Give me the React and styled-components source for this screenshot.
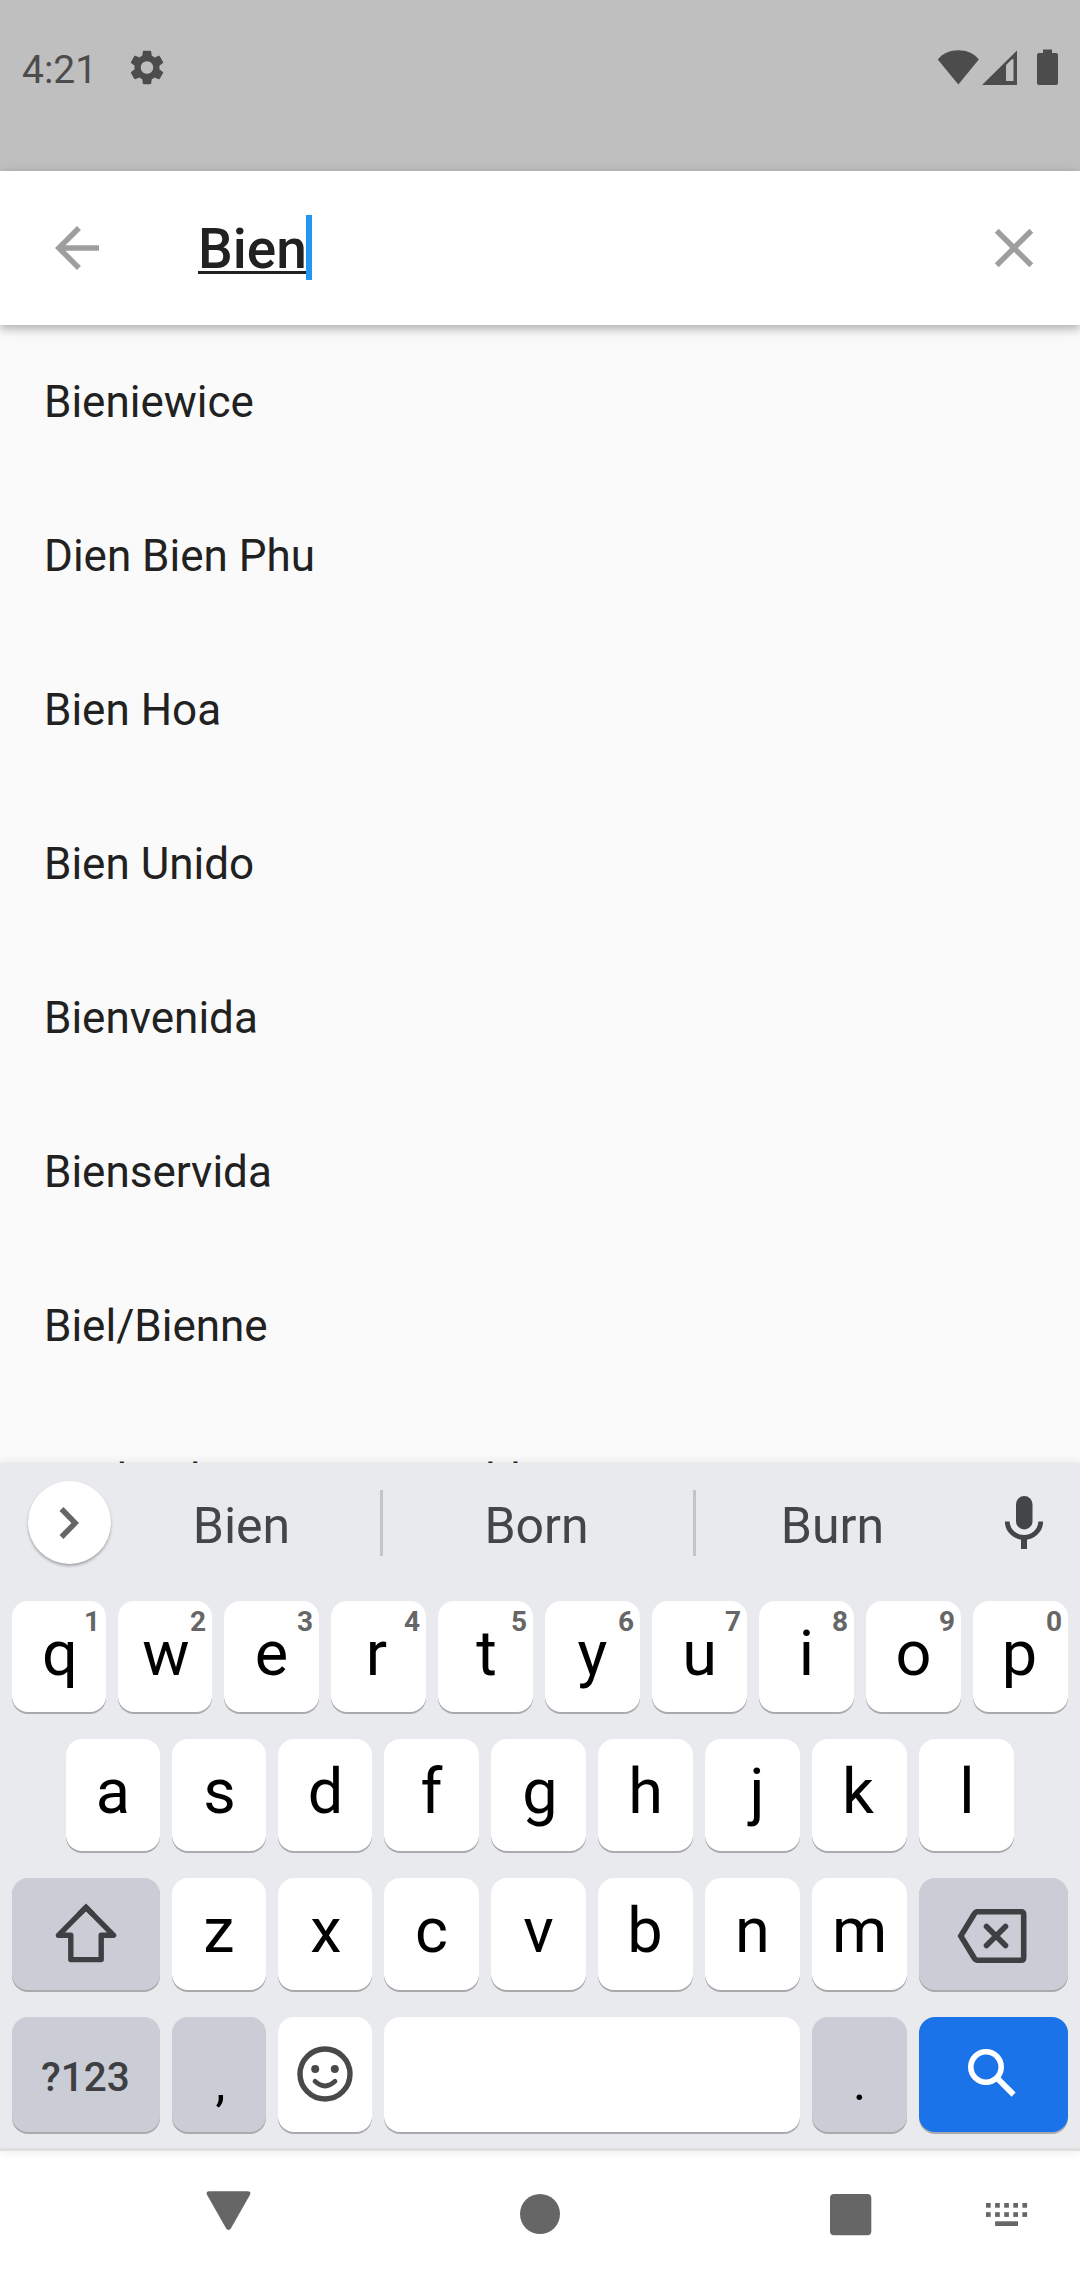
import React from "react";
import styled, { createGlobalStyle, css } from "styled-components";

const Global = createGlobalStyle`
  * { box-sizing: border-box; }
  html, body { margin: 0; padding: 0; }
  body { width: 1080px; height: 2280px; overflow: hidden; background: #fafafa; }
`;

const Screen = styled.div`
  width: 1080px;
  height: 2280px;
  display: flex;
  flex-direction: column;
  overflow: hidden;
  font-family: Roboto, "Noto Sans", sans-serif;
  background: #fafafa;
`;

const StatusBar = styled.header`
  height: 171px;
  flex: none;
  display: flex;
  align-items: flex-start;
  padding: 49px 22px 0;
  background: #bfbfbf;
  color: #4c4c4c;
`;

const Clock = styled.span`
  font-size: 39px;
  line-height: 42px;
  width: 107px;
  flex: none;
`;

const StatusIcons = styled.div`
  display: flex;
  margin-left: auto;
`;

const Glyph = styled.svg`
  display: block;
  flex: none;
  width: ${(p) => p.$w}px;
  height: ${(p) => p.$h}px;
  margin: ${(p) => p.$m || "0"};
`;

const SearchBar = styled.div`
  height: 154px;
  flex: none;
  display: flex;
  align-items: center;
  padding: 0 33px 0 44px;
  background: #fff;
  box-shadow: 0 4px 8px rgba(0, 0, 0, 0.2), 0 3px 14px rgba(0, 0, 0, 0.13);
  z-index: 1;
`;

const Query = styled.div`
  flex: 1;
  display: flex;
  align-items: center;
  margin-left: 88px;
`;

const QueryText = styled.span`
  padding-top: 2px;
  font-size: 55px;
  line-height: 64px;
  font-weight: 500;
  color: #212121;
  text-decoration: underline;
  text-decoration-thickness: 3px;
  text-underline-offset: 3px;
  text-decoration-skip-ink: none;
`;

const Caret = styled.span`
  width: 6px;
  height: 65px;
  margin: -2px 0 0 -1px;
  background: #2196f3;
`;

const Results = styled.ul`
  flex: 1;
  min-height: 0;
  margin: 0;
  padding: 0;
  list-style: none;
  overflow: hidden;
`;

const Result = styled.li`
  height: 154px;
  display: flex;
  align-items: center;
  padding: 0 44px;
  font-size: 44px;
  line-height: 52px;
  color: #212121;
  white-space: nowrap;
`;

const Keyboard = styled.section`
  height: 688px;
  flex: none;
  display: flex;
  flex-direction: column;
  background: #e8eaed;
  border-bottom: 3px solid #e0e0e0;
  box-shadow: 0 0 9px rgba(0, 0, 0, 0.1);
  z-index: 1;
`;

const Suggestions = styled.div`
  height: 138px;
  flex: none;
  display: grid;
  grid-template-columns: 102px 278px 3px 310px 3px 276px 108px;
  padding-top: 18px;
  align-items: start;
`;

const Expand = styled.div`
  width: 83px;
  height: 83px;
  margin-left: 28px;
  border-radius: 50%;
  background: #fff;
  box-shadow: 0 2px 3px rgba(0, 0, 0, 0.3);
  display: flex;
  align-items: center;
  justify-content: center;
`;

const Suggestion = styled.span`
  text-align: center;
  padding: 15px ${(p) => p.$right || 0}px 0 ${(p) => p.$left || 0}px;
  font-size: 50px;
  line-height: 60px;
  color: #444548;
`;

const Divider = styled.span`
  height: 66px;
  margin-top: 9px;
  background: #c3c4c8;
`;

const KeyRow = styled.div`
  display: grid;
  gap: 12px;
  flex: none;
  height: ${(p) => p.$h || 112}px;
  margin: 0 ${(p) => p.$inset || 12}px ${(p) => p.$after}px;
  grid-template-columns: ${(p) => p.$cols};
`;

const tones = {
  light: css`background: #fff; color: #000;`,
  dim: css`background: #cacdd6; color: #000;`,
  action: css`background: #1a73e8; color: #fff;`,
};

const Key = styled.div`
  position: relative;
  display: flex;
  justify-content: center;
  border-radius: 16px;
  box-shadow: 0 2px 0 #a9aaac;
  ${(p) => tones[p.$tone || "light"]}
`;

const Letter = styled.span`
  font-size: 63px;
  line-height: 74px;
  padding-top: 16px;
  margin-left: ${(p) => 2 * (p.$nudge || 0)}px;
`;

const Mark = styled.span`
  font-size: 50px;
  line-height: 60px;
  padding-top: 36px;
  margin-left: ${(p) => 2 * (p.$nudge || 0)}px;
`;

const Mode = styled.span`
  font-size: 40.5px;
  font-weight: 500;
  line-height: 48px;
  padding-top: 36px;
  margin-right: 1px;
  color: #3e3f42;
`;

const Hint = styled.span`
  position: absolute;
  top: 4px;
  right: 6px;
  font-size: 28px;
  line-height: 34px;
  font-weight: 700;
  color: #666;
`;

const NavBar = styled.nav`
  height: 129px;
  flex: none;
  display: flex;
  align-items: flex-start;
  background: #fff;
  color: #666;
`;

const TOP = "qwertyuiop".split("");
const HOME = "asdfghjkl".split("");
const BOTTOM = "zxcvbnm".split("");

// Horizontal shifts that centre each letter's ink, not its advance, on the key.
const NUDGE = { q: 1, w: 1, r: -2, t: 1, p: -1, s: 0.5, d: 0.5, g: 1.5, j: 4.5, k: -1.5, l: 0.5, x: 1, b: -0.5 };

const PLACES = [
  "Bieniewice",
  "Dien Bien Phu",
  "Bien Hoa",
  "Bien Unido",
  "Bienvenida",
  "Bienservida",
  "Biel/Bienne",
  "Zeeland Bienne Rineveld",
];

export default function App() {
  return (
    <Screen>
      <Global />
      <StatusBar>
        <Clock>4:21</Clock>
        <Glyph $w={34} $h={35} $m="1px 0 0 0.5px" viewBox="2.2 2 19.6 20" fill="currentColor" preserveAspectRatio="none">
          <path d="M19.14 12.94c.04-.3.06-.61.06-.94 0-.32-.02-.64-.07-.94l2.03-1.58c.18-.14.23-.41.12-.61l-1.92-3.32c-.12-.22-.37-.29-.59-.22l-2.39.96c-.5-.38-1.03-.7-1.62-.94l-.36-2.54c-.04-.24-.24-.41-.48-.41h-3.84c-.24 0-.43.17-.47.41l-.36 2.54c-.59.24-1.13.57-1.62.94l-2.39-.96c-.22-.08-.47 0-.59.22L2.74 8.87c-.12.21-.08.47.12.61l2.03 1.58c-.05.3-.09.63-.09.94s.02.64.07.94l-2.03 1.58c-.18.14-.23.41-.12.61l1.92 3.32c.12.22.37.29.59.22l2.39-.96c.5.38 1.03.7 1.62.94l.36 2.54c.05.24.24.41.48.41h3.84c.24 0 .44-.17.47-.41l.36-2.54c.59-.24 1.13-.56 1.62-.94l2.39.96c.22.08.47 0 .59-.22l1.92-3.32c.12-.22.07-.47-.12-.61zM12 15.6c-1.98 0-3.6-1.62-3.6-3.6s1.62-3.6 3.6-3.6 3.6 1.62 3.6 3.6-1.62 3.6-3.6 3.6" />
        </Glyph>
        <StatusIcons>
          <Glyph $w={42} $h={36} $m="0 3px 0 0" viewBox="0 0 42 36" fill="currentColor">
            <path d="M0.8 10.5C6 4 13 1.3 21.3 1.3S36.5 4 41.8 10.5L21.3 35.5Z" />
          </Glyph>
          <Glyph $w={35} $h={36} $m="0 20px 0 0" viewBox="0 0 35 36" fill="currentColor">
            <path fillRule="evenodd" d="M0 36L35 1.5V36ZM24 16V32H31.5V10Q30 9.5 28.5 11.5Z" />
          </Glyph>
          <Glyph $w={21} $h={36} viewBox="0 0 21 36" fill="currentColor">
            <path d="M6 0.5h9v3.5h4a2 2 0 0 1 2 2v28a2 2 0 0 1-2 2H2a2 2 0 0 1-2-2V6a2 2 0 0 1 2-2h4Z" />
          </Glyph>
        </StatusIcons>
      </StatusBar>

      <SearchBar>
        <Glyph $w={66} $h={66} viewBox="0 0 24 24" fill="#9e9e9e">
          <path d="M20 11H7.83l5.59-5.59L12 4l-8 8 8 8 1.41-1.41L7.83 13H20v-2z" />
        </Glyph>
        <Query>
          <QueryText>Bien</QueryText>
          <Caret />
        </Query>
        <Glyph $w={66} $h={66} viewBox="0 0 24 24" fill="#9e9e9e">
          <path d="M19 6.41L17.59 5 12 10.59 6.41 5 5 6.41 10.59 12 5 17.59 6.41 19 12 13.41 17.59 19 19 17.59 13.41 12z" />
        </Glyph>
      </SearchBar>

      <Results>
        {PLACES.map((place) => (
          <Result key={place}>{place}</Result>
        ))}
      </Results>

      <Keyboard>
        <Suggestions>
          <Expand>
            <Glyph $w={24} $h={36} $m="1px 1px 0 0" viewBox="0 0 24 36" fill="none" stroke="#666" strokeWidth="5.4">
              <path d="M4.5 4L18.2 18L4.5 32" />
            </Glyph>
          </Expand>
          <Suggestion $left={1}>Bien</Suggestion>
          <Divider />
          <Suggestion $right={3}>Born</Suggestion>
          <Divider />
          <Suggestion $right={3}>Burn</Suggestion>
          <Glyph $w={38} $h={53} $m="15px 0 0 33px" viewBox="0 0 38 53">
            <rect x="11" y="0" width="16.5" height="33.5" rx="8.25" fill="#444548" />
            <path d="M2.3 25.5a16.7 15.9 0 0 0 33.4 0" fill="none" stroke="#444548" strokeWidth="4.8" />
            <path d="M19 41v12" stroke="#444548" strokeWidth="6" />
          </Glyph>
        </Suggestions>

        <KeyRow $cols="94px 94px repeat(8, 95px)" $h={111} $after={27}>
          {TOP.map((letter, i) => (
            <Key key={letter}>
              <Letter $nudge={NUDGE[letter]}>{letter}</Letter>
              <Hint>{(i + 1) % 10}</Hint>
            </Key>
          ))}
        </KeyRow>
        <KeyRow $cols="repeat(3, 94px) repeat(6, 95px)" $inset={66} $after={27}>
          {HOME.map((letter) => (
            <Key key={letter}>
              <Letter $nudge={NUDGE[letter]}>{letter}</Letter>
            </Key>
          ))}
        </KeyRow>
        <KeyRow $cols="148px 94px 94px repeat(5, 95px) 149px" $after={27}>
          <Key $tone="dim">
            <Glyph $w={62} $h={60} $m="25px 1px 0 0" viewBox="0 0 62 60" fill="none" stroke="#3e3f42" strokeWidth="5.4" strokeLinejoin="round">
              <path d="M31 4.4L58.6 32.3H46.2V56.6H15.8V32.3H3.4Z" />
              <path d="M24 11.4L31 4.4L38 11.4" strokeLinejoin="miter" />
            </Glyph>
          </Key>
          {BOTTOM.map((letter) => (
            <Key key={letter}>
              <Letter $nudge={NUDGE[letter]}>{letter}</Letter>
            </Key>
          ))}
          <Key $tone="dim">
            <Glyph $w={70} $h={56} $m="30px 3px 0 0" viewBox="0 0 70 56" fill="none" stroke="#3e3f42" strokeWidth="5.6">
              <path d="M20 3.8H64Q66.7 3.8 66.7 6.5V49.5Q66.7 52.2 64 52.2H20Q18.6 52.2 17.5 50.5L3.8 28L17.5 5.5Q18.6 3.8 20 3.8Z" />
              <path d="M29.5 18.5L48.5 37.5M48.5 18.5L29.5 37.5" strokeLinecap="round" />
            </Glyph>
          </Key>
        </KeyRow>
        <KeyRow $cols="148px 94px 94px 416px 95px 149px" $h={115} $after={16}>
          <Key $tone="dim">
            <Mode>?123</Mode>
          </Key>
          <Key $tone="dim">
            <Mark $nudge={1.5}>,</Mark>
          </Key>
          <Key>
            <Glyph $w={56} $h={56} $m="29px 0 0" viewBox="0 0 56 56" fill="none" stroke="#48494b">
              <circle cx="28" cy="28" r="25" strokeWidth="5.4" />
              <circle cx="18.2" cy="23" r="4" fill="#48494b" stroke="none" />
              <circle cx="37.8" cy="23" r="4" fill="#48494b" stroke="none" />
              <path d="M18 35.3Q28 44.5 38 35.3" strokeWidth="4.8" strokeLinecap="round" />
            </Glyph>
          </Key>
          <Key />
          <Key $tone="dim">
            <Mark>.</Mark>
          </Key>
          <Key $tone="action">
            <Glyph $w={50} $h={50} $m="31px 3px 0 0" viewBox="0 0 50 50" fill="none" stroke="#fff">
              <circle cx="19" cy="19" r="15.2" strokeWidth="5.6" />
              <path d="M31 31L46.6 46.6" strokeWidth="5.8" />
            </Glyph>
          </Key>
        </KeyRow>
      </Keyboard>

      <NavBar>
        <Glyph $w={45} $h={40} $m="39px 0 0 206px" viewBox="0 0 45 40" fill="currentColor">
          <path d="M3 1.2H42Q45.5 1.2 44 4.7L25 38.3Q22.5 41.6 20 38.3L1 4.7Q-0.5 1.2 3 1.2Z" />
        </Glyph>
        <Glyph $w={40} $h={40} $m="43px 0 0 269px" viewBox="0 0 40 40" fill="currentColor">
          <circle cx="20" cy="20" r="20" />
        </Glyph>
        <Glyph $w={42} $h={42} $m="43px 0 0 270px" viewBox="0 0 42 42" fill="currentColor">
          <rect x="0" y="0" width="41.3" height="41.3" rx="4" />
        </Glyph>
        <Glyph $w={42} $h={24} $m="52px 0 0 114px" viewBox="0 0 42 24" fill="currentColor">
          {[0, 1, 2, 3, 4].map((i) => (
            <React.Fragment key={i}>
              <rect x={i * 9.1} y="0" width="4.7" height="4.7" />
              <rect x={i * 9.1} y="9.2" width="4.7" height="4.7" />
            </React.Fragment>
          ))}
          <rect x="9.1" y="18.3" width="22.9" height="4.7" />
        </Glyph>
      </NavBar>
    </Screen>
  );
}
